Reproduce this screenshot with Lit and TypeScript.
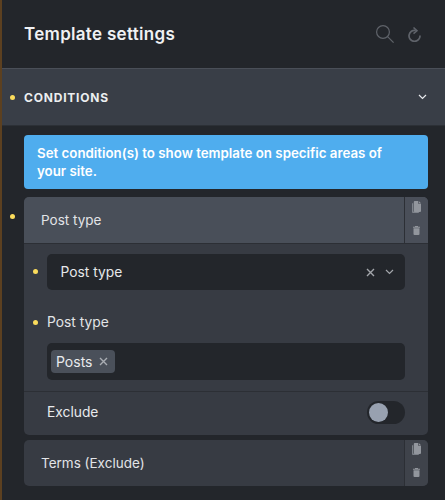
import {LitElement, css, html, svg} from 'lit';
import {customElement} from 'lit/decorators.js';

const copyIcon = html`<svg class="copy" width="9" height="12" viewBox="0 0 9 12">
  <path d="M0 2.2h1.2v8.4h5.6V12H1a1 1 0 0 1-1-1z" fill="currentColor" opacity="0.75"></path>
  <path d="M1.8 1a1 1 0 0 1 1-1h3.4v2.8H9V10a1 1 0 0 1-1 1H2.8a1 1 0 0 1-1-1z" fill="currentColor"></path>
  <path d="M6.8 0 9 2.2H6.8z" fill="currentColor"></path>
</svg>`;

const trashIcon = html`<svg width="7" height="9" viewBox="0 0 7 9">
  <path d="M0 .8h2V0h3v.8h2v.9H0z" fill="currentColor"></path>
  <path d="M.5 2.3h6V8a1 1 0 0 1-1 1h-4a1 1 0 0 1-1-1z" fill="currentColor"></path>
</svg>`;

const chevron = svg`<path d="M1 1l3.5 3.5L8 1" fill="none" stroke="currentColor" stroke-width="1.2"></path>`;
const cross = svg`<path d="M1 1l7 7M8 1l-7 7" fill="none" stroke="currentColor" stroke-width="1.4"></path>`;

@customElement('app-root')
export class AppRoot extends LitElement {
  static styles = css`
    :host {
      display: block;
      width: 445px;
      height: 500px;
      overflow: hidden;
      box-sizing: border-box;
      border-left: 2px solid #5c4020;
      background: #23262b;
      color: #e8eaed;
      font-family: Inter, 'Liberation Sans', sans-serif;
      font-size: 13.5px;
    }

    .header {
      display: flex;
      align-items: center;
      justify-content: space-between;
      height: 68px;
      box-sizing: border-box;
      padding: 0 24px 0 22px;
    }

    .title {
      font-size: 17px;
      font-weight: 600;
      letter-spacing: 0.3px;
      color: #f0f1f3;
    }

    .header-icons {
      display: flex;
      align-items: center;
      gap: 14px;
      color: #5f636a;
    }

    .section {
      position: relative;
      display: flex;
      align-items: center;
      justify-content: space-between;
      height: 58px;
      box-sizing: border-box;
      padding: 0 18px 0 22px;
      background: #393e47;
      border-top: 1px solid #4a4f58;
      border-bottom: 1px solid #2c3036;
      font-size: 12px;
      font-weight: 700;
      letter-spacing: 0.8px;
      color: #eceef0;
    }

    .section svg {
      color: #e8eaed;
    }

    .dot {
      position: absolute;
      width: 5px;
      height: 5px;
      border-radius: 50%;
      background: #fbdc5c;
    }

    .content {
      display: flex;
      flex-direction: column;
      padding: 9px 17px 0 22px;
    }

    .notice {
      box-sizing: border-box;
      height: 54px;
      padding: 9px 30px 9px 13px;
      border-radius: 4px;
      background: #4fadee;
      color: #fff;
      font-size: 13.3px;
      font-weight: 600;
      line-height: 18px;
    }

    .card {
      position: relative;
      margin-top: 8px;
      border-radius: 5px;
      background: #373b43;
    }

    .card + .card {
      margin-top: 5px;
    }

    .card-head {
      display: flex;
      height: 46px;
      border-radius: 5px;
      overflow: hidden;
    }

    .card-head.open {
      height: 47px;
      box-sizing: border-box;
      border-radius: 5px 5px 0 0;
      background: #494f59;
      border-bottom: 1px solid #2c2f35;
    }

    .card-label {
      flex: 1;
      display: flex;
      align-items: center;
      padding-left: 17px;
      color: #e2e4e7;
    }

    .tools {
      box-sizing: border-box;
      width: 24px;
      display: flex;
      flex-direction: column;
      align-items: center;
      gap: 13px;
      padding-top: 4px;
      border-left: 1px solid #2c2f35;
      color: #92969d;
      background: #4a4f59;
    }

    .tools.closed {
      padding-top: 3px;
      background: #3f434b;
    }

    .row {
      position: relative;
      padding: 0 23px;
      font-size: 13.8px;
    }

    .row.select-row {
      padding-top: 10px;
      padding-bottom: 13px;
    }

    .field {
      display: flex;
      align-items: center;
      box-sizing: border-box;
      height: 36px;
      padding: 0 11px 0 13.5px;
      border-radius: 5px;
      background: #23262b;
      color: #e6e8ea;
    }

    .field .grow {
      flex: 1;
    }

    .field svg {
      color: #a3a6ab;
    }

    .field svg + svg {
      margin-left: 10px;
    }

    .row.multi-row {
      padding-bottom: 11px;
      border-bottom: 1px solid #2c2f35;
    }

    .row-label {
      display: block;
      padding: 11px 0 12px;
      line-height: 17px;
      color: #e2e4e7;
    }

    .field.multi {
      height: 37px;
      padding: 0 4px;
    }

    .tag {
      display: flex;
      align-items: center;
      gap: 7px;
      height: 23px;
      padding: 0 7px 0 5px;
      border-radius: 4px;
      background: #4a505a;
      color: #e8eaed;
      font-size: 14px;
    }

    .tag svg {
      color: #a9adb3;
    }

    .row.exclude {
      display: flex;
      align-items: center;
      justify-content: space-between;
      box-sizing: border-box;
      height: 43px;
      padding-bottom: 3px;
    }

    .toggle {
      box-sizing: border-box;
      width: 38px;
      height: 23px;
      padding: 2px;
      border-radius: 12px;
      background: #23262b;
    }

    .toggle span {
      display: block;
      width: 19px;
      height: 19px;
      border-radius: 50%;
      background: #98a1b0;
    }
  `;

  render() {
    return html`
      <div class="header">
        <span class="title">Template settings</span>
        <div class="header-icons">
          <svg width="18" height="18" viewBox="0 0 18 18" fill="none" stroke="currentColor" stroke-width="1.2">
            <circle cx="7" cy="7" r="6.4"></circle>
            <path d="M11.6 11.6 17.6 17.6"></path>
          </svg>
          <svg width="13" height="15" viewBox="0 0 13 15" fill="none" stroke="currentColor" stroke-width="1.7">
            <path d="M7.8 3.5A5.5 5.5 0 1 0 12 8.5"></path>
            <path d="M5.5 .5 9 3.8 5.5 6.6" stroke-width="1.5"></path>
          </svg>
        </div>
      </div>

      <div class="section">
        <i class="dot" style="left:8px;top:26px"></i>
        <span>CONDITIONS</span>
        <svg width="9" height="6" viewBox="0 0 9 6">${chevron}</svg>
      </div>

      <div class="content">
        <div class="notice">Set condition(s) to show template on specific areas of your site.</div>

        <div class="card">
          <i class="dot" style="left:-14px;top:17px"></i>
          <div class="card-head open">
            <div class="card-label">Post type</div>
            <div class="tools">${copyIcon}${trashIcon}</div>
          </div>

          <div class="row select-row">
            <i class="dot" style="left:9px;top:25px"></i>
            <div class="field">
              <span class="grow">Post type</span>
              <svg width="9" height="9" viewBox="0 0 9 9">${cross}</svg>
              <svg width="9" height="6" viewBox="0 0 9 6">${chevron}</svg>
            </div>
          </div>

          <div class="row multi-row">
            <i class="dot" style="left:9px;top:17px"></i>
            <span class="row-label">Post type</span>
            <div class="field multi">
              <div class="tag">
                <span>Posts</span>
                <svg width="9" height="9" viewBox="0 0 9 9">${cross}</svg>
              </div>
            </div>
          </div>

          <div class="row exclude">
            <span>Exclude</span>
            <div class="toggle"><span></span></div>
          </div>
        </div>

        <div class="card">
          <div class="card-head">
            <div class="card-label">Terms (Exclude)</div>
            <div class="tools closed">${copyIcon}${trashIcon}</div>
          </div>
        </div>
      </div>
    `;
  }
}
